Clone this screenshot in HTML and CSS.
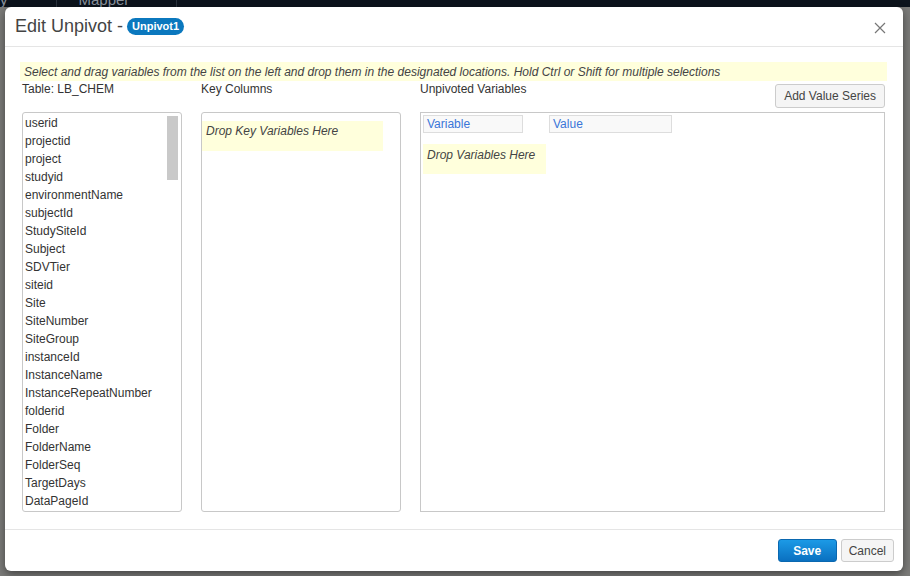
FILE: index.html
```html
<!DOCTYPE html>
<html lang="en">

<head>
  <meta charset="UTF-8" />
  <meta name="viewport" content="width=device-width, initial-scale=1.0" />
  <title>Edit Unpivot</title>
  <link rel="stylesheet" href="styles.css">
</head>

<body>
  <div class="topnav">
    <span class="nav-item">y</span>
    <span class="nav-item nav-wide">Mapper</span>
  </div>

  <div class="modal">
    <div class="modal-header">
      <h4 class="modal-title">Edit Unpivot - <span class="badge">Unpivot1</span></h4>
      <span class="close">
        <svg width="12" height="12" viewBox="0 0 12 12">
          <path d="M1 1L11 11M11 1L1 11" stroke="#777" stroke-width="1.2" fill="none" />
        </svg>
      </span>
    </div>

    <div class="modal-body">
      <div class="hint">Select and drag variables from the list on the left and drop them in the designated locations. Hold Ctrl or Shift for multiple selections</div>

      <div class="columns">
        <div class="col col-table">
          <div class="col-head">Table: LB_CHEM</div>
          <div class="box var-list">
            <div class="item">userid</div>
            <div class="item">projectid</div>
            <div class="item">project</div>
            <div class="item">studyid</div>
            <div class="item">environmentName</div>
            <div class="item">subjectId</div>
            <div class="item">StudySiteId</div>
            <div class="item">Subject</div>
            <div class="item">SDVTier</div>
            <div class="item">siteid</div>
            <div class="item">Site</div>
            <div class="item">SiteNumber</div>
            <div class="item">SiteGroup</div>
            <div class="item">instanceId</div>
            <div class="item">InstanceName</div>
            <div class="item">InstanceRepeatNumber</div>
            <div class="item">folderid</div>
            <div class="item">Folder</div>
            <div class="item">FolderName</div>
            <div class="item">FolderSeq</div>
            <div class="item">TargetDays</div>
            <div class="item">DataPageId</div>
            <!-- fake scrollbar thumb -->
            <div class="thumb"></div>
          </div>
        </div>

        <div class="col col-key">
          <div class="col-head">Key Columns</div>
          <div class="box">
            <div class="drop drop-key">Drop Key Variables Here</div>
          </div>
        </div>

        <div class="col col-unpivot">
          <div class="col-head">
            <span>Unpivoted Variables</span>
            <button class="btn btn-default btn-series">Add Value Series</button>
          </div>
          <div class="box box-square">
            <div class="series-head">
              <div class="series-name name-var">Variable</div>
              <div class="series-name name-val">Value</div>
            </div>
            <div class="drop drop-var">Drop Variables Here</div>
          </div>
        </div>
      </div>
    </div>

    <div class="modal-footer">
      <button class="btn btn-primary">Save</button>
      <button class="btn btn-default btn-cancel">Cancel</button>
    </div>
  </div>
</body>

</html>
```

FILE: styles.css
```css
* {
  margin: 0;
  padding: 0;
  box-sizing: border-box;
}

html,
body {
  height: 100%;
}

body {
  background-color: #7b7b79;
  font-family: "Liberation Sans", Arial, sans-serif;
  font-size: 12px;
  color: #333;
  overflow: hidden;
  position: relative;
}

.topnav {
  height: 7px;
  background-color: #0c131c;
  overflow: hidden;
  display: flex;
  color: #8a929c;
  font-size: 15px;
  line-height: 0;
}

.nav-item {
  padding: 0 48px 0 0;
  border-right: 1px solid #2a323c;
}

.nav-wide {
  padding: 0 47px 0 22px;
}

.modal {
  position: absolute;
  left: 5px;
  top: 7px;
  width: 898px;
  height: 564px;
  background-color: #fff;
  border-radius: 6px;
  box-shadow: 0 3px 8px rgba(0, 0, 0, 0.45);
  display: flex;
  flex-direction: column;
}

.modal-header {
  height: 40px;
  border-bottom: 1px solid #e5e5e5;
  display: flex;
  align-items: center;
  justify-content: space-between;
  padding: 0 17px 0 10px;
}

.modal-title {
  font-size: 18px;
  font-weight: normal;
  color: #444;
  display: flex;
  align-items: center;
  gap: 4px;
  padding-bottom: 1px;
}

.badge {
  background-color: #0b78be;
  color: #fff;
  font-size: 11px;
  font-weight: bold;
  border-radius: 9px;
  height: 17px;
  line-height: 17px;
  padding: 0 5px;
}

.close {
  display: flex;
  margin-top: 2px;
}

.modal-body {
  padding: 15px 16px 17px 15px;
  display: flex;
  flex-direction: column;
}

.hint {
  background-color: #ffffdc;
  font-style: italic;
  line-height: 20px;
  height: 19px;
  padding: 0 4px;
  color: #444;
}

.columns {
  display: flex;
  gap: 19px;
  padding: 0 2px;
}

.col {
  display: flex;
  flex-direction: column;
}

.col-table {
  width: 160px;
}

.col-key {
  width: 200px;
}

.col-unpivot {
  flex: 1;
}

.col-head {
  height: 31px;
  padding-top: 1px;
  line-height: 14px;
  display: flex;
  justify-content: space-between;
  align-items: flex-start;
}

.col-head .btn {
  margin-top: 2px;
}

.box {
  height: 400px;
  border: 1px solid #c8c8c8;
  border-radius: 3px;
  position: relative;
  overflow: hidden;
}

.box-square {
  border-radius: 0;
}

.var-list {
  padding: 1px 2px 0;
}

.item {
  line-height: 18px;
  white-space: nowrap;
}

.thumb {
  position: absolute;
  top: 3px;
  right: 3px;
  width: 11px;
  height: 64px;
  background-color: #c9c9c9;
}

.drop {
  background-color: #ffffdc;
  font-style: italic;
  color: #444;
  height: 30px;
  padding: 3px 4px;
  line-height: 14px;
}

.drop-key {
  width: 181px;
  margin-top: 8px;
}

.series-head {
  display: flex;
  gap: 26px;
  padding: 2px 0 0 2px;
}

.series-name {
  height: 18px;
  line-height: 16px;
  border: 1px solid #ddd;
  background-color: #f9f9f9;
  color: #3a76d8;
  padding: 0 3px;
}

.name-var {
  width: 100px;
}

.name-val {
  width: 123px;
}

.drop-var {
  width: 123px;
  margin: 11px 0 0 2px;
  padding-top: 4px;
}

.btn {
  font-family: "Liberation Sans", Arial, sans-serif;
  font-size: 12px;
  height: 23px;
  padding: 0 9px;
  border-radius: 3px;
  cursor: pointer;
}

.btn-default {
  background-color: #f5f5f5;
  border: 1px solid #ccc;
  color: #444;
}

.btn-series {
  height: 24px;
  padding: 0 8px;
}

.btn-cancel {
  padding: 0 7px;
}

.btn-primary {
  background: linear-gradient(#1c9ae6, #0a70c0);
  border: 1px solid #0a68b0;
  color: #fff;
  font-weight: bold;
  width: 59px;
}

.modal-footer {
  border-top: 1px solid #e5e5e5;
  flex: 1;
  display: flex;
  justify-content: flex-end;
  align-items: flex-start;
  gap: 4px;
  padding: 9px 9px 0 0;
}
```
